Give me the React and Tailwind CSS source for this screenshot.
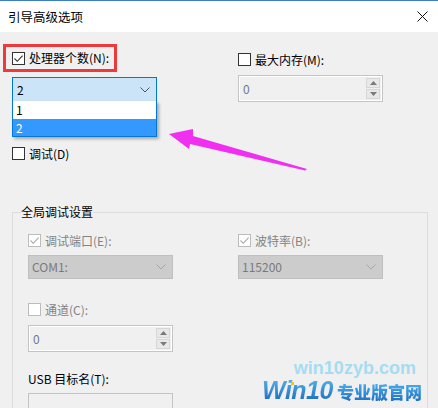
import React from 'react';

/**
 * Windows-style "引导高级选项" dialog (msconfig boot advanced options)
 */
const Checkbox = ({ checked, disabled }) => (
	<span
		className={`w-[13px] h-[13px] border bg-white flex items-center justify-center shrink-0 ${
			disabled ? 'border-[#bcbcbc]' : 'border-[#333333]'
		}`}
	>
		{checked && (
			<svg width="11" height="11" viewBox="0 0 11 11" fill="none">
				<path d="M1.5 5.5l2.8 2.8L9.6 2.6" stroke={disabled ? '#a8a8a8' : '#333333'} strokeWidth="1.1" />
			</svg>
		)}
	</span>
);

const CheckRow = ({ checked, disabled, label }) => (
	<div className="flex items-center gap-[4px] h-[13px]">
		<Checkbox checked={checked} disabled={disabled} />
		<span className={`leading-[16px] ${disabled ? 'text-[#838383]' : 'text-black'}`}>{label}</span>
	</div>
);

const Chevron = ({ color }) => (
	<svg width="10" height="6" viewBox="0 0 10 6" fill="none">
		<path d="M0.5 0.5l4.5 4.5 4.5-4.5" stroke={color} strokeWidth="1" />
	</svg>
);

const SpinBox = ({ value }) => (
	<div className="w-[145px] h-[27px] border border-[#c4c4c4] flex">
		<div className="flex-1 border border-white border-r-0 flex items-center pl-[3px] text-[#6d7a8a] leading-[16px]">
			{value}
		</div>
		<div className="w-[17px] flex flex-col gap-[1px] p-[1px] border border-white border-l-0">
			<div className="flex-1 bg-[#e8e8e8] border border-[#d6d6d6] flex items-center justify-center">
				<svg width="7" height="4" viewBox="0 0 7 4"><path d="M0 4L3.5 0 7 4z" fill="#7a7a7a" /></svg>
			</div>
			<div className="flex-1 bg-[#e8e8e8] border border-[#d6d6d6] flex items-center justify-center">
				<svg width="7" height="4" viewBox="0 0 7 4"><path d="M0 0L3.5 4 7 0z" fill="#7a7a7a" /></svg>
			</div>
		</div>
	</div>
);

const DisabledSelect = ({ value }) => (
	<div className="w-[145px] h-[24px] bg-[#cccccc] border border-[#bfbfbf] flex items-center justify-between pl-[3px] pr-[6px]">
		<span className="text-[#7a7a7a] leading-[16px]">{value}</span>
		<Chevron color="#a5a5a5" />
	</div>
);

const App = () => {
	return (
		<div className="relative w-[438px] h-[408px] overflow-hidden bg-[#f0f0f0] border-t border-[#3a7fc4] font-['Noto_Sans_CJK_SC',sans-serif] text-[12px] text-black">
			{/* Title bar */}
			<div className="h-[31px] bg-white flex items-center justify-between pl-[8px] pr-[10px]">
				<span className="leading-[16px] text-[12.5px]">引导高级选项</span>
				<svg width="11" height="11" viewBox="0 0 11 11" fill="none">
					<path d="M0.5 0.5l10 10M10.5 0.5l-10 10" stroke="#111111" strokeWidth="1" />
				</svg>
			</div>

			{/* Top options */}
			<div className="flex">
				<div className="w-[235px] pl-[3px]">
					<div className="relative">
						<div className="mt-[12px] w-[114px] h-[28px] border-[3px] border-[#ee3a3a] flex items-center pl-[6px]">
							<CheckRow checked label="处理器个数(N):" />
						</div>
						<div className="mt-[5px] ml-[9px] w-[145px] h-[25px] bg-[#cce4f7] border border-[#0078d7] flex items-center justify-between pl-[4px] pr-[6px]">
							<span className="leading-[16px]">2</span>
							<Chevron color="#555555" />
						</div>
						{/* Open dropdown list */}
						<div className="absolute left-[9px] top-[57px] w-[145px] border border-[#0078d7] border-t-0 bg-white shadow-[2px_2px_3px_rgba(0,0,0,0.3)] z-10">
							<div className="h-[18px] flex items-center pl-[3px] leading-[16px]">1</div>
							<div className="h-[17px] flex items-center pl-[3px] leading-[16px] bg-[#3399ff] text-white">2</div>
						</div>
					</div>
					<div className="mt-[45px] ml-[9px]">
						<CheckRow label="调试(D)" />
					</div>
				</div>
				<div className="ml-[3px]">
					<div className="mt-[21px]">
						<CheckRow label="最大内存(M):" />
					</div>
					<div className="mt-[9px]">
						<SpinBox value="0" />
					</div>
				</div>
			</div>

			{/* Global debug settings */}
			<fieldset className="mt-[44px] ml-[12px] w-[416px] h-[250px] border border-[#dcdcdc]">
				<legend className="ml-[8px] leading-[16px] text-black">全局调试设置</legend>
				<div className="grid grid-cols-[145px_145px] gap-x-[65px] pl-[15px]">
					<div>
						<div className="mt-[14px]">
							<CheckRow checked disabled label="调试端口(E):" />
						</div>
						<div className="mt-[8px]">
							<DisabledSelect value="COM1:" />
						</div>
						<div className="mt-[24px]">
							<CheckRow disabled label="通道(C):" />
						</div>
						<div className="mt-[9px]">
							<SpinBox value="0" />
						</div>
						<div className="mt-[19px] leading-[16px]">USB 目标名(T):</div>
						<div className="mt-[6px] w-[145px] h-[26px] border border-[#c4c4c4] bg-[#f0f0f0]" />
					</div>
					<div>
						<div className="mt-[14px]">
							<CheckRow checked disabled label="波特率(B):" />
						</div>
						<div className="mt-[8px]">
							<DisabledSelect value="115200" />
						</div>
					</div>
				</div>
			</fieldset>

			{/* Magenta annotation arrow */}
			<svg className="absolute left-0 top-0 pointer-events-none" width="438" height="408" viewBox="0 0 438 408">
				<polygon
					points="169,133 193,128 193,135 307,168 305,169.5 190,143 189,148"
					fill="#f02ff0"
				/>
			</svg>

			{/* Watermark */}
			<div className="absolute left-[262px] top-[357px] flex flex-col items-end font-['Liberation_Sans',sans-serif] font-bold">
				<span className="text-[18px] leading-[20px] text-[#a6dcf2] pr-[6px]">win10zyb.com</span>
				<div className="relative flex items-baseline gap-[4px] -mt-[1px]">
					<span className="italic text-[25px] leading-[26px] tracking-[-0.5px] bg-linear-to-b from-[#5bb6f0] to-[#1669bf] bg-clip-text text-transparent">
						Win10
					</span>
					<span className="absolute left-[29px] top-[5px] w-[3px] h-[3px] bg-[#f7c21a]" />
					<span className="text-[17px] leading-[20px] font-['Noto_Sans_CJK_SC',sans-serif] font-black bg-linear-to-b from-[#4fb0ee] to-[#1a6fc4] bg-clip-text text-transparent">
						专业版官网
					</span>
				</div>
			</div>
		</div>
	);
};

export default App;
